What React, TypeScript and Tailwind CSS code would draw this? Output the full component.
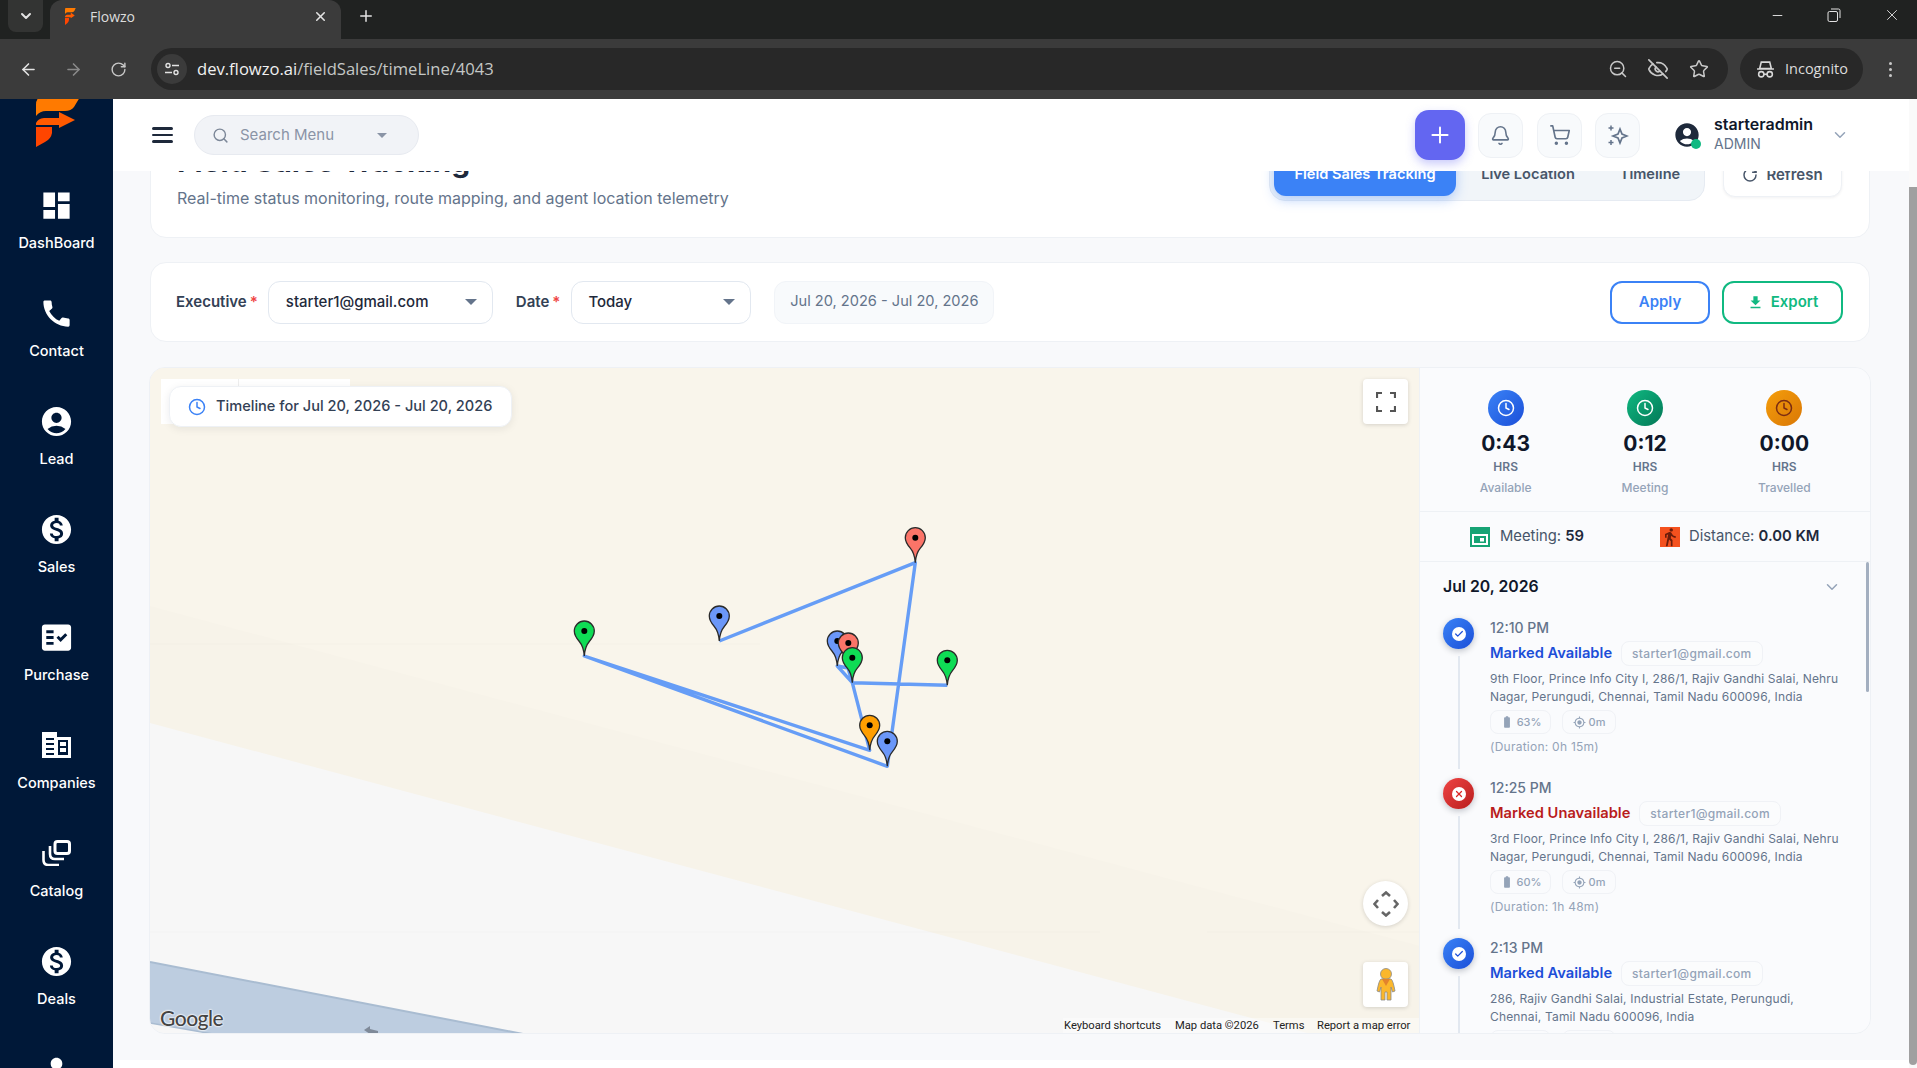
import { ArrowLeft, ArrowRight, Bell, Check, ChevronDown, Clock, EyeOff, Minus, Plus, RotateCw, Search, ShoppingCart, Star, X, ZoomOut } from "lucide-react";
import {
  MdAccountCircle,
  MdBatteryFull,
  MdCall,
  MdDashboard,
  MdDirectionsWalk,
  MdFactCheck,
  MdFileDownload,
  MdGpsFixed,
  MdMonetizationOn,
  MdPerson,
} from "react-icons/md";

const INTER = "font-['Inter',sans-serif]";

function FlowzoLogo({ className }: { className?: string }) {
  return (
    <svg viewBox="0 0 44 48" preserveAspectRatio="none" className={className}>
      <path d="M6 -2H44L38 8Q35 12 29 12H10Q4 12 0 17V6Q0 -2 6 -2Z" fill="#ff7a00" />
      <path d="M0 24Q2 19.5 8 19H23V13L39 21L23 29V26H0Z" fill="#ff5a00" />
      <path d="M0 28H16V34Q15 40 9 43L0 48Z" fill="#ff4500" />
    </svg>
  );
}

function CompaniesIcon() {
  return (
    <svg width="29" height="26" viewBox="0 0 29 26">
      <path d="M0 0H15V5H29V26H0Z" fill="#fff" />
      <path d="M4 7H12M4 12H12M4 17H12M4 22H12" stroke="#001838" strokeWidth="2" />
      <path d="M16 8H26V23H16Z" fill="#001838" />
      <path d="M18 10H24V14H18ZM18 16H24V20H18Z" fill="#fff" />
    </svg>
  );
}

function CatalogIcon() {
  return (
    <svg width="29" height="26" viewBox="0 0 29 26">
      <rect x="13" y="1.5" width="14.5" height="12" rx="2.5" fill="#001838" stroke="#fff" strokeWidth="3" />
      <path d="M8 6V14Q8 19 13 19H22" fill="none" stroke="#fff" strokeWidth="2.6" />
      <path d="M1.5 11V20Q1.5 25 6.5 25H17" fill="none" stroke="#fff" strokeWidth="2.6" />
    </svg>
  );
}

const NAV_ITEMS = [
  { label: "DashBoard", icon: <MdDashboard size={35} /> },
  { label: "Contact", icon: <MdCall size={35} /> },
  { label: "Lead", icon: <MdAccountCircle size={35} /> },
  { label: "Sales", icon: <MdMonetizationOn size={35} /> },
  { label: "Purchase", icon: <MdFactCheck size={35} /> },
  { label: "Companies", icon: <CompaniesIcon /> },
  { label: "Catalog", icon: <CatalogIcon /> },
  { label: "Deals", icon: <MdMonetizationOn size={35} /> },
  { label: "", icon: <MdPerson size={35} /> },
];

function Sidebar() {
  return (
    <aside className="w-[113px] shrink-0 bg-[#001838] overflow-hidden text-white">
      <FlowzoLogo className="w-[44px] h-[48px] ml-[36px]" />
      <nav className="mt-[43px]">
        {NAV_ITEMS.map((item) => (
          <div key={item.label || "more"} className="h-[108px] flex flex-col items-center">
            <div className="h-[30px] flex items-center justify-center">{item.icon}</div>
            <span className="mt-[13px] text-[14.5px] leading-5 font-medium">{item.label}</span>
          </div>
        ))}
      </nav>
    </aside>
  );
}

function BrowserChrome() {
  return (
    <div className="h-[99px] shrink-0 bg-[#3b3b3b] font-['Open_Sans',sans-serif] text-[#e3e3e3]">
      <div className="h-[39px] bg-[#202221] flex items-start">
        <div className="ml-[8px] w-[35px] h-[32px] bg-[#333433] rounded-b-lg flex items-center justify-center">
          <ChevronDown size={16} strokeWidth={3} />
        </div>
        <div className="ml-[7px] w-[291px] h-[39px] bg-[#3b3b3b] rounded-t-xl flex items-center pl-[15px] pr-[13px] pb-[7px]">
          <FlowzoLogo className="w-[11px] h-[17px]" />
          <span className="ml-[14px] text-[14px] text-[#dcdcdc]">Flowzo</span>
          <X size={15} strokeWidth={2.5} className="ml-auto" />
        </div>
        <Plus size={18} strokeWidth={2} className="ml-[16px] mt-[7px]" />
        <div className="ml-auto flex items-center mt-[6px]">
          <Minus size={15} strokeWidth={1.5} />
          <svg width="14" height="14" viewBox="0 0 14 14" className="ml-[42px]" fill="none" stroke="#e3e3e3">
            <rect x="1" y="3.5" width="9.5" height="10" rx="1.5" />
            <path d="M4 1H11.5Q13 1 13 2.5V10" />
          </svg>
          <X size={18} strokeWidth={1.2} className="ml-[42px] mr-[16px]" />
        </div>
      </div>
      <div className="h-[60px] flex items-center">
        <ArrowLeft size={19} strokeWidth={2} className="ml-[19px]" />
        <ArrowRight size={19} strokeWidth={2} className="ml-[26px] text-[#8a8a8a]" />
        <RotateCw size={17} strokeWidth={2} className="ml-[27px] text-[#c8c8c8]" />
        <div className="ml-[24px] w-[1577px] h-[42px] rounded-full bg-[#282828] flex items-center pl-[6px]">
          <div className="w-[30px] h-[30px] rounded-full bg-[#3b3b3b] flex items-center justify-center">
            <svg width="16" height="16" viewBox="0 0 16 16" fill="none" stroke="#e3e3e3" strokeWidth="1.4">
              <circle cx="4" cy="4.5" r="2" />
              <path d="M8 4.5H15M1 11.5H8" />
              <circle cx="12" cy="11.5" r="2" />
            </svg>
          </div>
          <span className="ml-[10px] text-[16.6px] text-[#f0f0f0]">
            dev.flowzo.ai<span className="text-[#c4c7c5]">/fieldSales/timeLine/4043</span>
          </span>
          <ZoomOut size={20} strokeWidth={1.8} className="ml-auto text-[#c8c8c8]" />
          <EyeOff size={22} strokeWidth={1.8} className="ml-[19px] text-[#c8c8c8]" />
          <Star size={20} strokeWidth={1.8} className="ml-[20px] mr-[19px] text-[#c8c8c8]" />
        </div>
        <div className="ml-[12px] w-[123px] h-[42px] rounded-full bg-[#282828] flex items-center pl-[16px]">
          <svg width="19" height="19" viewBox="0 0 18 18" fill="none" stroke="#d8d8d8" strokeWidth="1.5">
            <path d="M5 2H13L14.5 8H3.5ZM1 8.5H17" />
            <circle cx="5" cy="13.5" r="2.5" />
            <circle cx="13" cy="13.5" r="2.5" />
            <path d="M7.5 13.5H10.5" />
          </svg>
          <span className="ml-[10px] text-[14.5px] text-[#dcdcdc]">Incognito</span>
        </div>
        <div className="ml-[26px] flex flex-col gap-[3px]">
          <span className="w-[3px] h-[3px] rounded-full bg-[#c8c8c8]" />
          <span className="w-[3px] h-[3px] rounded-full bg-[#c8c8c8]" />
          <span className="w-[3px] h-[3px] rounded-full bg-[#c8c8c8]" />
        </div>
      </div>
    </div>
  );
}

function TopBar() {
  return (
    <header className="h-[72px] shrink-0 bg-white flex items-center pl-[39px]">
      <div className="w-[21px] flex flex-col gap-[4px]">
        <span className="h-[2.5px] bg-[#1e293b] rounded" />
        <span className="h-[2.5px] bg-[#1e293b] rounded" />
        <span className="h-[2.5px] bg-[#1e293b] rounded" />
      </div>
      <div className="ml-[21px] w-[225px] h-[40px] rounded-full bg-[#f1f3f7] border border-[#e7eaf0] flex items-center pl-[17px]">
        <Search size={17} strokeWidth={2} className="text-[#7c8798]" />
        <span className="ml-[11px] text-[15px] text-[#8a94a6]">Search Menu</span>
        <span className="ml-[43px] w-0 h-0 border-x-[5px] border-x-transparent border-t-[5px] border-t-[#8a94a6]" />
      </div>
      <div className="ml-auto flex items-center">
        <div className="w-[50px] h-[50px] rounded-[14px] bg-[#6366f1] shadow-[0_4px_10px_rgba(99,102,241,0.35)] flex items-center justify-center text-white">
          <Plus size={26} strokeWidth={1.8} />
        </div>
        <div className="ml-[13px] w-[45px] h-[45px] rounded-[13px] bg-[#f8fafc] border border-[#eef1f5] flex items-center justify-center text-[#64748b]">
          <Bell size={21} strokeWidth={1.8} />
        </div>
        <div className="ml-[14px] w-[45px] h-[45px] rounded-[13px] bg-[#f8fafc] border border-[#eef1f5] flex items-center justify-center text-[#64748b]">
          <ShoppingCart size={22} strokeWidth={1.8} />
        </div>
        <div className="ml-[13px] w-[45px] h-[45px] rounded-[13px] bg-[#f8fafc] border border-[#eef1f5] flex items-center justify-center">
          <svg width="22" height="22" viewBox="0 0 22 22" fill="none" stroke="#64748b" strokeWidth="1.7">
            <path d="M13 5L15 10L20 12L15 14L13 19L11 14L6 12L11 10Z" />
            <path d="M4 1.5V6.5M1.5 4H6.5M4 16V21M1.5 18.5H6.5" strokeWidth="1.5" />
          </svg>
        </div>
        <div className="ml-[33px] relative w-[28px] h-[28px] text-[#1e293b]">
          <MdAccountCircle size={28} />
          <span className="absolute right-[0px] bottom-[0px] w-[10px] h-[10px] rounded-full bg-[#10b981]" />
        </div>
        <div className="ml-[13px] w-[117px] -mt-[2px]">
          <div className="text-[16px] leading-5 font-semibold text-[#0f172a]">starteradmin</div>
          <div className="text-[14px] leading-5 text-[#64748b]">ADMIN</div>
        </div>
        <ChevronDown size={18} strokeWidth={2} className="text-[#94a3b8] mr-[60px]" />
      </div>
    </header>
  );
}

function Pin({ x, y, color }: { x: number; y: number; color: string }) {
  return (
    <g transform={`translate(${x} ${y})`}>
      <path
        d="M0 0C-0.5 -7 -2 -11 -5 -14.5C-8 -18 -10 -21 -10 -25A10 10 0 1 1 10 -25C10 -21 8 -18 5 -14.5C2 -11 0.5 -7 0 0Z"
        fill={color}
        stroke="#2a2a2a"
        strokeWidth="1.3"
      />
      <circle cx="0" cy="-25" r="3" fill="#000" />
    </g>
  );
}

function MapView() {
  return (
    <svg viewBox="150 367 1270 666" className="block w-[1270px] h-[666px] shrink-0">
      <rect x="150" y="367" width="1270" height="666" fill="#f7f7f7" />
      <path d="M150 367H1420V1033H1311L150 722Z" fill="#f7f3e9" />
      <path d="M150 367H1420V945L150 605Z" fill="#f9f5eb" />
      <path d="M150 643H760M1207 931H1420M150 931H1100" stroke="#000" strokeOpacity="0.02" strokeWidth="1" />
      <path d="M150 961L523 1033H213L150 1022Z" fill="#bdcde0" />
      <path d="M150 961L523 1033" stroke="#a9bcd1" strokeWidth="2" />
      <path d="M150 1022L213 1033" stroke="#a9bcd1" strokeWidth="1.5" />
      <path d="M364 1029L370 1025V1028L378 1030V1033H370L364 1029Z" fill="#7f8a99" />
      <polyline
        points="719.3,640 915.3,561.7 887.3,765.3 584.3,655 869.7,749.3 852.3,681.7 837.3,665 848,667 852.3,681.7 947.3,684.3"
        fill="none"
        stroke="#669df6"
        strokeWidth="3.4"
        strokeLinejoin="round"
      />
      <Pin x={584.3} y={655} color="#0fdc55" />
      <Pin x={719.3} y={640} color="#6b97f8" />
      <Pin x={915.3} y={561.7} color="#fb7468" />
      <Pin x={837.3} y={665} color="#6b97f8" />
      <Pin x={848.3} y={667} color="#fb7468" />
      <Pin x={852.3} y={681.7} color="#0fdc55" />
      <Pin x={947.3} y={684.3} color="#0fdc55" />
      <Pin x={869.7} y={749.3} color="#ff9e00" />
      <Pin x={887.3} y={765.3} color="#6b97f8" />
    </svg>
  );
}

function MapCard() {
  return (
    <div className="relative w-[1269px] h-[665px] shrink-0 overflow-hidden">
      <MapView />
      <div className="absolute left-[11px] top-[11px] w-[189px] h-[45px] bg-white flex">
        <div className="w-[78px] border-r border-[#eeeeee]" />
      </div>
      <div className={`absolute left-[19px] top-[18px] w-[343px] h-[41px] rounded-xl bg-white border border-[#eef1f5] shadow-[0_2px_8px_rgba(15,23,42,0.08)] flex items-center pl-[18px] ${INTER}`}>
        <Clock size={18} strokeWidth={2} className="text-[#3b82f6]" />
        <span className="ml-[10px] text-[14.6px] font-medium text-[#334155]">Timeline for Jul 20, 2026 - Jul 20, 2026</span>
      </div>
      <div className="absolute left-[1213px] top-[11px] w-[45px] h-[45px] bg-white rounded-sm shadow-[0_1px_4px_rgba(0,0,0,0.15)] flex items-center justify-center">
        <svg width="20" height="20" viewBox="0 0 20 20" fill="none" stroke="#555" strokeWidth="2.2">
          <path d="M1 6V1H6M14 1H19V6M19 14V19H14M6 19H1V14" />
        </svg>
      </div>
      <div className="absolute left-[1213px] top-[513px] w-[45px] h-[45px] bg-white rounded-full shadow-[0_1px_4px_rgba(0,0,0,0.15)] flex items-center justify-center">
        <svg width="26" height="26" viewBox="0 0 26 26" fill="none" stroke="#666" strokeWidth="2.6">
          <path d="M9 5L13 1.5L17 5M9 21L13 24.5L17 21M5 9L1.5 13L5 17M21 9L24.5 13L21 17" />
        </svg>
      </div>
      <div className="absolute left-[1213px] top-[594px] w-[45px] h-[45px] bg-white rounded-sm shadow-[0_1px_4px_rgba(0,0,0,0.15)] flex items-center justify-center">
        <svg width="20" height="33" viewBox="0 0 20 33">
          <circle cx="10" cy="6" r="5.5" fill="#fbb72c" stroke="#8a8a8a" strokeWidth="0.8" />
          <path d="M5 11H15Q17 12 19 23L16.5 24L15 19V32H11V24H9V32H5V19L3.5 24L1 23Q3 12 5 11Z" fill="#fbb72c" stroke="#8a8a8a" strokeWidth="0.8" />
          <path d="M6 11H14L10 18Z" fill="#e2832c" />
        </svg>
      </div>
      <span className="absolute left-[10px] bottom-[3px] text-[21px] leading-6 font-['Lato',sans-serif] font-medium text-[#444] tracking-[-0.5px] [text-shadow:0_0_2px_#fff,0_0_2px_#fff,0_0_2px_#fff]">
        Google
      </span>
      <div className="absolute right-0 bottom-0 h-[15px] w-[356px] pt-[1px] flex items-center bg-white/40 font-['Roboto',sans-serif] text-[11.2px] text-[#222] whitespace-nowrap">
        <span className="w-[112px] pl-[1px]">Keyboard shortcuts</span>
        <span className="w-[98px]">Map data ©2026</span>
        <span className="w-[44px]">Terms</span>
        <span className="w-[102px]">Report a map error</span>
      </div>
    </div>
  );
}

const STATS = [
  { value: "0:43", label: "Available", tone: "bg-gradient-to-br from-[#3b82f6] to-[#1d4ed8] text-white" },
  { value: "0:12", label: "Meeting", tone: "bg-gradient-to-br from-[#10b981] to-[#047857] text-white" },
  { value: "0:00", label: "Travelled", tone: "bg-gradient-to-br from-[#f59e0b] to-[#d97706] text-[#7c2d12]" },
];

const EVENTS = [
  {
    time: "12:10 PM",
    title: "Marked Available",
    ok: true,
    address: ["9th Floor, Prince Info City I, 286/1, Rajiv Gandhi Salai, Nehru", "Nagar, Perungudi, Chennai, Tamil Nadu 600096, India"],
    battery: "63%",
    duration: "(Duration: 0h 15m)",
  },
  {
    time: "12:25 PM",
    title: "Marked Unavailable",
    ok: false,
    address: ["3rd Floor, Prince Info City I, 286/1, Rajiv Gandhi Salai, Nehru", "Nagar, Perungudi, Chennai, Tamil Nadu 600096, India"],
    battery: "60%",
    duration: "(Duration: 1h 48m)",
  },
  {
    time: "2:13 PM",
    title: "Marked Available",
    ok: true,
    address: ["286, Rajiv Gandhi Salai, Industrial Estate, Perungudi,", "Chennai, Tamil Nadu 600096, India"],
    battery: "58%",
    duration: "",
  },
];

function TimelineItem({ event }: { event: (typeof EVENTS)[number] }) {
  return (
    <div className="h-[160px] flex gap-[16px]">
      <div className="w-[31px] shrink-0 flex flex-col items-center">
        <div
          className={`w-[31px] h-[31px] shrink-0 rounded-full flex items-center justify-center shadow-[0_2px_6px_rgba(15,23,42,0.25)] ${
            event.ok ? "bg-gradient-to-br from-[#3b82f6] to-[#1d4ed8]" : "bg-gradient-to-br from-[#ef4444] to-[#b91c1c]"
          }`}
        >
          <div className="w-[14px] h-[14px] rounded-full bg-white flex items-center justify-center">
            {event.ok ? (
              <Check size={10} strokeWidth={3} className="text-[#1d4ed8]" />
            ) : (
              <X size={10} strokeWidth={3} className="text-[#dc2626]" />
            )}
          </div>
        </div>
        <div className="mt-[7px] w-[2px] h-[113px] bg-[#e2e8f0]" />
      </div>
      <div className="flex-1">
        <div className="text-[14px] leading-5 font-medium text-[#64748b]">{event.time}</div>
        <div className="mt-[3px] h-[25px] flex items-center">
          <span className={`text-[14.7px] font-semibold ${event.ok ? "text-[#1d4ed8]" : "text-[#b91c1c]"}`}>{event.title}</span>
          <span className="ml-[9px] h-[25px] px-[10px] rounded-lg bg-[#fbfcfd] border border-[#f0f2f6] flex items-center text-[12px] tracking-[0.3px] font-medium text-[#94a3b8]">
            starter1@gmail.com
          </span>
        </div>
        <div className="mt-[4px] text-[12px] tracking-[0.16px] leading-[18px] text-[#64748b] whitespace-nowrap">
          {event.address.map((line) => (
            <div key={line}>{line}</div>
          ))}
        </div>
        <div className="mt-[4px] flex gap-[11px] text-[11px] font-medium text-[#94a3b8]">
          <span className="h-[24px] w-[61px] rounded-lg border border-[#f0f2f6] flex items-center justify-center gap-[3px]">
            <MdBatteryFull size={14} />
            {event.battery}
          </span>
          <span className="h-[24px] w-[54px] rounded-lg border border-[#f0f2f6] flex items-center justify-center gap-[3px]">
            <MdGpsFixed size={13} />
            0m
          </span>
        </div>
        <div className="mt-[5px] text-[12px] tracking-[0.25px] leading-4 text-[#94a3b8]">{event.duration}</div>
      </div>
    </div>
  );
}

function SidePanel() {
  return (
    <div className="flex-1 min-w-0 bg-[#fafbfd] border-l border-[#eef1f5] flex flex-col">
      <div className="grid grid-cols-3 px-[16px] pt-[22px] pb-[15px] text-center">
        {STATS.map((stat) => (
          <div key={stat.label} className="flex flex-col items-center">
            <div className={`w-[36px] h-[36px] rounded-full flex items-center justify-center ${stat.tone}`}>
              <Clock size={18} strokeWidth={2} />
            </div>
            <div className="mt-[4px] text-[21px] leading-7 font-bold text-[#0f172a]">{stat.value}</div>
            <div className="mt-[1px] text-[12px] leading-4 font-semibold text-[#64748b]">HRS</div>
            <div className="mt-[5px] text-[12px] leading-4 font-medium text-[#94a3b8]">{stat.label}</div>
          </div>
        ))}
      </div>
      <div className="h-[51px] shrink-0 border-y border-[#eef1f5] flex items-center pl-[50px] text-[14.8px] text-[#475569]">
        <div className="w-[190px] flex items-center gap-[10px]">
          <svg width="20" height="20" viewBox="0 0 20 20">
            <rect width="20" height="20" fill="#16a374" />
            <path d="M2 4H18V18H2Z" fill="#fff" />
            <rect x="2" y="4" width="16" height="3" fill="#16a374" />
            <path d="M4 9H16V16H4Z" fill="#16a374" />
            <rect x="10" y="11" width="4" height="3.5" fill="#fff" />
          </svg>
          <span>
            Meeting: <b className="font-semibold text-[#1e293b]">59</b>
          </span>
        </div>
        <div className="flex items-center gap-[9px]">
          <div className="w-[20px] h-[20px] bg-[#f4511e] flex items-center justify-center text-[#6b1d0b]">
            <MdDirectionsWalk size={20} />
          </div>
          <span>
            Distance: <b className="font-semibold text-[#1e293b]">0.00 KM</b>
          </span>
        </div>
      </div>
      <div className="relative flex-1 overflow-hidden px-[23px]">
        <div className="h-[50px] flex items-center justify-between pr-[6px]">
          <span className="text-[15.8px] font-semibold text-[#0f172a]">Jul 20, 2026</span>
          <ChevronDown size={18} strokeWidth={2} className="text-[#94a3b8]" />
        </div>
        <div className="mt-[6px]">
          {EVENTS.map((event) => (
            <TimelineItem key={event.time} event={event} />
          ))}
        </div>
        <div className="absolute right-[1px] top-0 w-[3px] h-[130px] rounded bg-[#a3afc0]" />
      </div>
    </div>
  );
}

function Content() {
  return (
    <div className="h-[889px] shrink-0 bg-[#f8f9fb] overflow-hidden pl-[37px] pr-[39px]">
      <div className="-mt-[40px] h-[107px] rounded-2xl bg-white border border-[#eef1f5] flex justify-between pl-[26px] pr-[27px]">
        <div className="pt-[11px]">
          <h1 className="text-[30px] leading-9 font-bold text-[#1e293b]">Field Sales Tracking</h1>
          <p className="mt-[9px] text-base leading-5 text-[#64748b]">Real-time status monitoring, route mapping, and agent location telemetry</p>
        </div>
        <div className="pt-[15px] flex items-start">
          <div className="h-[54px] rounded-2xl bg-[#f1f5f9] border border-[#e6ebf2] p-[4px] flex items-center text-[14.6px] font-semibold text-[#475569]">
            <span className="h-[44px] w-[182px] pt-[2px] rounded-xl bg-[#3b82f6] text-white shadow-[0_4px_12px_rgba(59,130,246,0.35)] flex items-center justify-center">Field Sales Tracking</span>
            <span className="w-[144px] pt-[2px] text-center">Live Location</span>
            <span className="w-[100px] pt-[2px] text-center">Timeline</span>
          </div>
          <div className="ml-[18px] mt-[6px] h-[44px] w-[119px] rounded-xl bg-white border border-[#eef1f5] shadow-[0_1px_3px_rgba(15,23,42,0.06)] flex items-center justify-center gap-[8px] text-[15px] font-semibold text-[#475569]">
            <RotateCw size={16} strokeWidth={2.2} className="text-[#475569]" />
            Refresh
          </div>
        </div>
      </div>

      <div className="mt-[24px] h-[80px] rounded-2xl bg-white border border-[#eef1f5] flex items-center pl-[25px] pr-[26px]">
        <span className="text-[15px] font-semibold text-[#334155]">
          Executive<span className="ml-[3px] text-[#ef4444]">*</span>
        </span>
        <div className="ml-[10px] w-[225px] h-[43px] rounded-xl border border-[#e2e8f0] flex items-center pl-[17px] pr-[15px] text-[15px] font-medium text-[#1e293b]">
          starter1@gmail.com
          <span className="ml-auto w-0 h-0 border-x-[6px] border-x-transparent border-t-[6px] border-t-[#64748b]" />
        </div>
        <span className="ml-[23px] text-[15px] font-semibold text-[#334155]">
          Date<span className="ml-[3px] text-[#ef4444]">*</span>
        </span>
        <div className="ml-[11px] w-[180px] h-[43px] rounded-xl border border-[#e2e8f0] flex items-center pl-[16px] pr-[15px] text-[15px] font-medium text-[#1e293b]">
          Today
          <span className="ml-auto w-0 h-0 border-x-[6px] border-x-transparent border-t-[6px] border-t-[#64748b]" />
        </div>
        <div className="ml-[23px] w-[220px] h-[43px] rounded-xl bg-[#f8fafc] border border-[#f1f4f8] flex items-center justify-center text-[14.6px] text-[#64748b]">
          Jul 20, 2026 - Jul 20, 2026
        </div>
        <button className="ml-auto w-[100px] h-[43px] rounded-xl border-2 border-[#3b82f6] text-[15px] font-semibold text-[#3b82f6]">Apply</button>
        <button className="ml-[12px] w-[121px] h-[43px] rounded-xl border-2 border-[#10b981] text-[15px] font-semibold text-[#10b981] flex items-center justify-center gap-[7px]">
          <MdFileDownload size={17} />
          Export
        </button>
      </div>

      <div className="mt-[25px] h-[667px] rounded-2xl overflow-hidden flex border border-[#eef1f5] -mx-px box-border">
        <MapCard />
        <SidePanel />
      </div>
    </div>
  );
}

export default function App() {
  return (
    <div className={`h-screen w-full flex flex-col overflow-hidden bg-white ${INTER}`}>
      <BrowserChrome />
      <div className="flex-1 min-h-0 flex">
        <Sidebar />
        <main className="flex-1 min-w-0 flex flex-col">
          <TopBar />
          <Content />
        </main>
        <div className="w-[8px] shrink-0 bg-[#fafafa]">
          <div className="mt-[88px] h-[878px] rounded-b bg-[#a0a0a0]" />
        </div>
      </div>
    </div>
  );
}
